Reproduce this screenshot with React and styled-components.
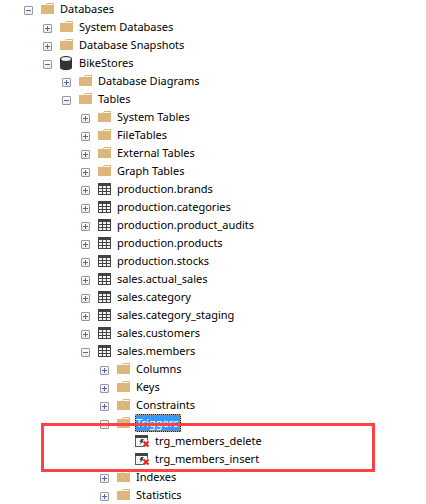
import React, { useState } from "react";
import styled, { createGlobalStyle } from "styled-components";

const GlobalStyle = createGlobalStyle`
  body {
    margin: 0;
    background: #fff;
    color: #000;
    font-family: "Noto Sans", "Open Sans", sans-serif;
    font-size: 11px;
  }
`;

const Explorer = styled.main`
  padding-left: 24px;
  overflow: hidden;
`;

const Branch = styled.ul`
  list-style: none;
  margin: 0;
  padding: 0 0 0 ${(p) => (p.$nested ? "19px" : "0")};
`;

const Item = styled.li`
  position: relative;
`;

const Row = styled.div`
  display: flex;
  align-items: center;
  height: 18px;
`;

const Toggle = styled.button`
  box-sizing: border-box;
  flex: none;
  display: grid;
  place-items: center;
  width: 9px;
  height: 9px;
  margin: 3px 7px 0 0;
  padding: 0;
  border: 1px solid #999;
  border-radius: 1px;
  background: linear-gradient(#fff, #e9e9ec);
`;

const ToggleSpace = styled.span`
  flex: none;
  width: 16px;
`;

const Icon = styled.svg`
  flex: none;
  display: block;
  width: 16px;
  height: 16px;
  margin-right: 3px;
`;

const Label = styled.span`
  box-sizing: border-box;
  height: 18px;
  padding: 0 2px 0 1px;
  line-height: 18px;
  white-space: nowrap;
  color: ${(p) => (p.$selected ? "#fff" : "#000")};
  background: ${(p) => (p.$selected ? "#3399ff" : "transparent")};
  box-shadow: ${(p) => (p.$selected ? "inset 0 0 0 1px #1a1a1a" : "none")};
  outline: ${(p) => (p.$selected ? "1px dotted #f09a30" : "none")};
  outline-offset: -1px;
`;

const Highlight = styled.div`
  position: absolute;
  box-sizing: border-box;
  inset: 9px 51px -4px -59px;
  border: 3px solid #ff4246;
  pointer-events: none;
  z-index: 1;
`;

function FolderIcon() {
  return (
    <Icon viewBox="0 0 16 16" aria-hidden="true">
      <path d="M1 4h5l1-2h7v11H1z" fill="#dcb67a" />
      <path d="M7.400 3h5.600v1H7z" fill="#fff" />
    </Icon>
  );
}

function DatabaseIcon() {
  return (
    <Icon viewBox="0 0 16 16" aria-hidden="true">
      <path d="M1 4c0-4 12-4 12 0v8.500c0 3.500-12 3.500-12 0z" fill="#333336" />
      <ellipse cx="7" cy="4" rx="4.800" ry="1.900" fill="#f1f1f3" />
    </Icon>
  );
}

function TableIcon() {
  return (
    <Icon viewBox="0 0 16 16" aria-hidden="true" shapeRendering="crispEdges">
      <path d="M1 2h13v12H1z" fill="#424244" />
      <path
        d="M2 5h3v2H2zM6 5h3v2H6zM10 5h3v2h-3zM2 8h3v2H2zM6 8h3v2H6zM10 8h3v2h-3zM2 11h3v2H2zM6 11h3v2H6zM10 11h3v2h-3z"
        fill="#f4f4f5"
      />
    </Icon>
  );
}

function TriggerIcon() {
  return (
    <Icon viewBox="0 0 16 16" aria-hidden="true">
      <path d="M0 2h13v12H0z" fill="#5a5a5c" />
      <path d="M0 2h13v3H0z" fill="#424244" />
      <path d="M1 5h11v8H1z" fill="#f7f7f7" />
      <path d="M6 6h3L7.500 8H9l-4.500 4L6 9H4.500z" fill="#424244" />
      <path d="M8.500 8.500l5 5M13.500 8.500l-5 5" stroke="#f7f7f7" strokeWidth="3.400" />
      <path d="M8.500 8.500l5 5M13.500 8.500l-5 5" stroke="#e02416" strokeWidth="2" />
    </Icon>
  );
}

const icons = {
  folder: FolderIcon,
  database: DatabaseIcon,
  table: TableIcon,
  trigger: TriggerIcon,
};

const node = (kind, name, extra) => ({ kind, name, ...extra });

const tree = [
  node("folder", "Databases", {
    children: [
      node("folder", "System Databases"),
      node("folder", "Database Snapshots"),
      node("database", "BikeStores", {
        children: [
          node("folder", "Database Diagrams"),
          node("folder", "Tables", {
            children: [
              node("folder", "System Tables"),
              node("folder", "FileTables"),
              node("folder", "External Tables"),
              node("folder", "Graph Tables"),
              node("table", "production.brands"),
              node("table", "production.categories"),
              node("table", "production.product_audits"),
              node("table", "production.products"),
              node("table", "production.stocks"),
              node("table", "sales.actual_sales"),
              node("table", "sales.category"),
              node("table", "sales.category_staging"),
              node("table", "sales.customers"),
              node("table", "sales.members", {
                children: [
                  node("folder", "Columns"),
                  node("folder", "Keys"),
                  node("folder", "Constraints"),
                  node("folder", "Triggers", {
                    selected: true,
                    highlighted: true,
                    children: [
                      node("trigger", "trg_members_delete"),
                      node("trigger", "trg_members_insert"),
                    ],
                  }),
                  node("folder", "Indexes"),
                  node("folder", "Statistics"),
                ],
              }),
            ],
          }),
        ],
      }),
    ],
  }),
];

function TreeNode({ item }) {
  const [open, setOpen] = useState(Boolean(item.children));
  const NodeIcon = icons[item.kind];
  return (
    <Item>
      <Row>
        {item.kind === "trigger" ? (
          <ToggleSpace />
        ) : (
          <Toggle
            type="button"
            aria-expanded={open}
            aria-label={`${open ? "Collapse" : "Expand"} ${item.name}`}
            onClick={() => setOpen(!open)}
          >
            <svg width="7" height="7" viewBox="0 0 7 7" shapeRendering="crispEdges" aria-hidden="true">
              <path d={open ? "M1 3h5v1H1z" : "M1 3h5v1H1zM3 1h1v5H3z"} fill="#4a67b8" />
            </svg>
          </Toggle>
        )}
        <NodeIcon />
        <Label $selected={item.selected}>{item.name}</Label>
      </Row>
      {open && item.children && (
        <Branch $nested>
          {item.children.map((child) => (
            <TreeNode key={child.name} item={child} />
          ))}
        </Branch>
      )}
      {item.highlighted && <Highlight />}
    </Item>
  );
}

export default function App() {
  return (
    <>
      <GlobalStyle />
      <Explorer>
        <Branch aria-label="Object Explorer">
          {tree.map((item) => (
            <TreeNode key={item.name} item={item} />
          ))}
        </Branch>
      </Explorer>
    </>
  );
}
